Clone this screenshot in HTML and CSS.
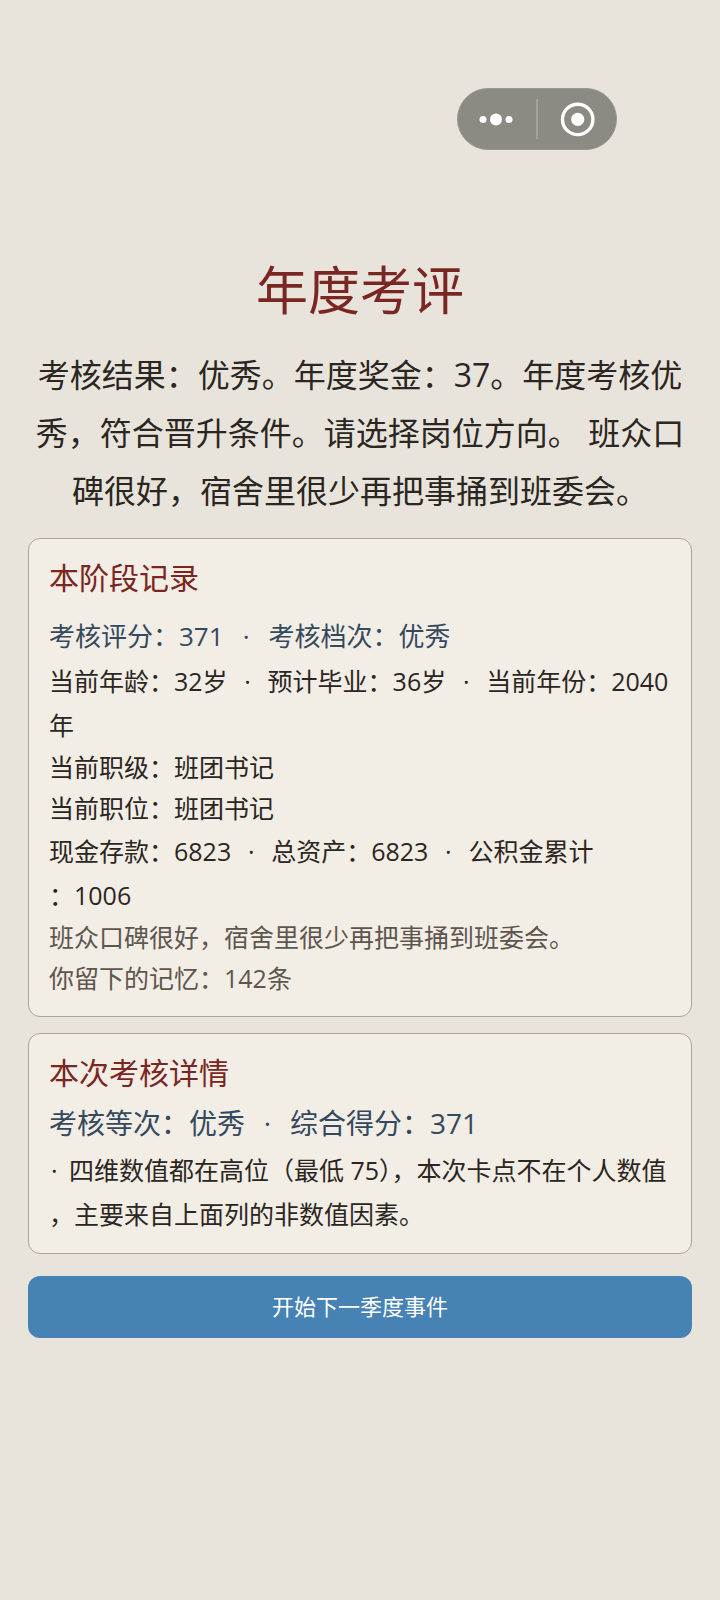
FILE: index.html
```html
<!DOCTYPE html>
<html lang="zh-CN">
<head>
  <meta charset="UTF-8">
  <meta name="viewport" content="width=device-width, initial-scale=1">
  <title>年度考评</title>
  <link rel="stylesheet" href="styles.css">
</head>
<body>
  <header class="top-bar">
    <div class="capsule">
      <button type="button" class="capsule-btn" aria-label="更多">
        <svg width="36" height="36" viewBox="0 0 36 36" fill="#ffffff">
          <circle cx="4" cy="18.4" r="3.5"/>
          <circle cx="17" cy="18.4" r="6"/>
          <circle cx="30" cy="18.4" r="3.5"/>
        </svg>
      </button>
      <span class="capsule-line"></span>
      <button type="button" class="capsule-btn" aria-label="关闭">
        <svg width="36" height="36" viewBox="0 0 36 36">
          <circle cx="18.7" cy="18.4" r="15.2" fill="none" stroke="#ffffff" stroke-width="3.4"/>
          <circle cx="18.7" cy="18.4" r="6.6" fill="#ffffff"/>
        </svg>
      </button>
    </div>
  </header>

  <main class="page">
    <h1 class="title">年度考评</h1>
    <p class="intro">考核结果：优秀。年度奖金：37。年度考核优<br>秀，符合晋升条件。请选择岗位方向。 班众口<br>碑很好，宿舍里很少再把事捅到班委会。</p>

    <section class="card">
      <h2 class="card-title record-title">本阶段记录</h2>
      <p class="score">考核评分：371<span class="dot">·</span>考核档次：优秀</p>
      <p class="row row-wrap">当前年龄：32岁<span class="dot">·</span>预计毕业：36岁<span class="dot">·</span>当前年份：2040<br>年</p>
      <p class="row">当前职级：班团书记</p>
      <p class="row">当前职位：班团书记</p>
      <p class="row row-wrap">现金存款：6823<span class="dot">·</span>总资产：6823<span class="dot">·</span>公积金累计<br>：1006</p>
      <p class="row muted">班众口碑很好，宿舍里很少再把事捅到班委会。</p>
      <p class="row muted">你留下的记忆：142条</p>
    </section>

    <section class="card">
      <h2 class="card-title">本次考核详情</h2>
      <p class="score score-large">考核等次：优秀<span class="dot">·</span>综合得分：371</p>
      <p class="row row-wrap"><span class="bullet">·</span>四维数值都在高位（最低 75），本次卡点不在个人数值<br>，主要来自上面列的非数值因素。</p>
    </section>

    <button type="button" class="next-btn">开始下一季度事件</button>
  </main>
</body>
</html>
```

FILE: styles.css
```css
* {
  box-sizing: border-box;
}

body {
  margin: 0;
  min-height: 100vh;
  background-color: #e8e4dc;
  color: #2b2621;
  font-family: "Open Sans", "Noto Sans CJK SC", sans-serif;
}

h1, h2, p {
  margin: 0;
  font-weight: normal;
}

button {
  border: none;
  padding: 0;
  font-family: inherit;
  cursor: pointer;
}

/* top capsule menu */
.top-bar {
  display: flex;
  justify-content: flex-end;
  padding: 88px 103px 0 28px;
}

.capsule {
  display: flex;
  align-items: center;
  width: 160px;
  height: 62px;
  border: 1px solid #989790;
  border-radius: 31px;
  background-color: #8b8a83;
}

.capsule-btn {
  flex: 1;
  display: flex;
  align-items: center;
  justify-content: center;
  height: 100%;
  background: none;
}

.capsule-line {
  width: 2px;
  height: 40px;
  background-color: #a3a29c;
}

.page {
  padding: 104px 28px 40px;
}

.title {
  color: #7a2622;
  font-size: 52px;
  line-height: 72px;
  text-align: center;
}

.intro {
  margin: 20px 0 18px;
  font-size: 32px;
  line-height: 58px;
  text-align: center;
}

/* cards */
.card {
  margin-bottom: 16px;
  padding: 18px 20px 17px;
  border: 1px solid #afa29d;
  border-radius: 12px;
  background-color: #f2ede5;
}

.card-title {
  margin-bottom: 4px;
  color: #7a2622;
  font-size: 30px;
  line-height: 42px;
}

.record-title {
  margin-bottom: 14px;
}

.score {
  color: #34495e;
  font-size: 26px;
  line-height: 46px;
}

.score-large {
  font-size: 28px;
  line-height: 50px;
}

.row {
  font-size: 25px;
  line-height: 41px;
}

.row-wrap {
  line-height: 44px;
}

.muted {
  color: #5e564e;
}

.dot {
  display: inline-block;
  width: 40px;
  text-align: center;
}

.score .dot {
  width: 45px;
}

.bullet {
  display: inline-block;
  width: 20px;
  padding-left: 2px;
}

.next-btn {
  display: block;
  width: 100%;
  height: 62px;
  margin-top: 22px;
  padding-bottom: 4px;
  border-radius: 12px;
  background-color: #4682b4;
  color: #ffffff;
  font-size: 22px;
}
```
